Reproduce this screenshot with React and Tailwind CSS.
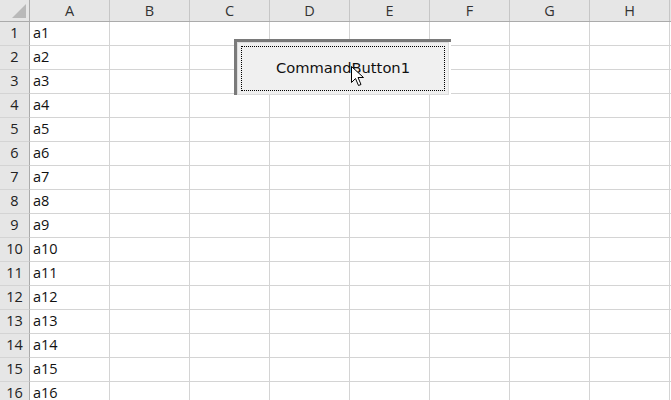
import React from "react";

const cols = ["A", "B", "C", "D", "E", "F", "G", "H", ""];

export default function App() {
  const rows = Array.from({ length: 16 }, (_, i) => i + 1);
  return (
    <div
      className="relative w-[671px] h-[400px] overflow-hidden bg-white"
      style={{ fontFamily: '"Open Sans", "Liberation Sans", sans-serif' }}
    >
      {/* header row */}
      <div className="flex h-[22px] bg-[#e6e6e6] border-b border-[#ababab]">
        <div className="relative w-[30px] shrink-0 border-r border-[#ababab]">
          <svg className="absolute right-[3px] bottom-[3px]" width="14" height="14" viewBox="0 0 14 14">
            <polygon points="14,0 14,14 0,14" fill="#b9b9b9" />
          </svg>
        </div>
        {cols.map((c, i) => (
          <div
            key={i}
            className="w-[80px] shrink-0 border-r border-[#c6c6c6] flex items-center justify-center text-[14.5px] text-[#333]"
          >
            {c}
          </div>
        ))}
      </div>
      {rows.map((r) => (
        <div key={r} className="flex h-[24px]">
          <div className="w-[30px] shrink-0 bg-[#e6e6e6] border-r border-b border-[#ababab] border-b-[#d4d4d4] flex items-end justify-center pb-[1px] text-[14.5px] text-[#222]">
            {r}
          </div>
          {cols.map((c, i) => (
            <div
              key={i}
              className="w-[80px] shrink-0 border-r border-b border-[#d4d4d4] flex items-end pl-[3px] pb-[1px] text-[14.5px] text-[#111]"
            >
              {i === 0 ? `a${r}` : ""}
            </div>
          ))}
        </div>
      ))}

      {/* Command button */}
      <div className="absolute left-[234px] top-[39px] w-[217px] h-[56px] border-l-[3px] border-t-[3px] border-[#7a7a7a] bg-white">
        <div className="w-[212px] h-[53px] bg-[#f0f0f0] border border-[#dcdcdc] p-[3px]">
          <div className="w-full h-full border border-dotted border-black flex items-center justify-center text-[#111]"
            style={{ fontFamily: '"DejaVu Sans", "Liberation Sans", sans-serif' }}>
            <span className="text-[14.7px]">CommandButton1</span>
          </div>
        </div>
      </div>

      {/* cursor */}
      <svg className="absolute left-[351px] top-[66px]" width="14" height="22" viewBox="0 0 14 22">
        <path d="M0.5 0.5 L0.5 16.5 L4.5 12.5 L7.5 19.5 L10 18.5 L7 11.5 L12.5 11.5 Z" fill="white" stroke="black" strokeWidth="1" />
      </svg>
    </div>
  );
}
